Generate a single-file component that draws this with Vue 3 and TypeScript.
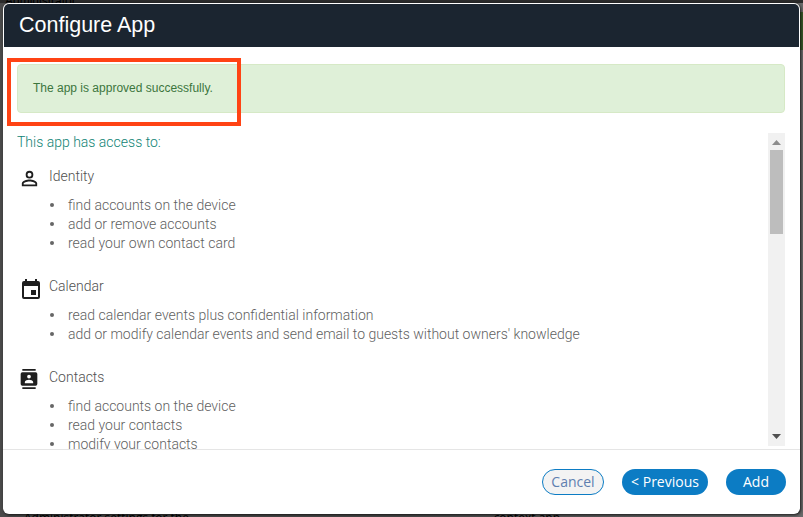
<script setup lang="ts">
interface Group { title: string; icon: string; items: string[] }
const groups: Group[] = [
  { title: 'Identity', icon: 'person', items: ['find accounts on the device', 'add or remove accounts', 'read your own contact card'] },
  { title: 'Calendar', icon: 'calendar', items: ['read calendar events plus confidential information', "add or modify calendar events and send email to guests without owners' knowledge"] },
  { title: 'Contacts', icon: 'contacts', items: ['find accounts on the device', 'read your contacts', 'modify your contacts'] },
]
</script>

<template>
  <div class="page">
    <div class="backdrop-top">Administrator</div>
    <div class="band"></div>
    <div class="backdrop-bottom"><span>Administrator settings for the</span><span>context app</span></div>
    <div class="modal">
      <header class="head">Configure App</header>
      <div class="body">
        <div class="alert">The app is approved successfully.</div>
        <div class="scroll">
          <div class="content">
            <p class="lead">This app has access to:</p>
            <section v-for="g in groups" :key="g.title" class="group">
              <div class="gtitle">
                <span class="slot">
                  <svg v-if="g.icon === 'person'" class="ic person" viewBox="0 0 24 24"><path d="M12 6a2.1 2.1 0 1 1 0 4.200A2.100 2.100 0 0 1 12 6m0 9c2.970 0 6.100 1.460 6.100 2.100v1.100H5.900v-1.100c0-.64 3.130-2.100 6.100-2.100M12 4a4 4 0 1 0 0 8 4 4 0 0 0 0-8zm0 9c-2.670 0-8 1.340-8 4v3h16v-3c0-2.660-5.330-4-8-4z"/></svg>
                  <svg v-else-if="g.icon === 'calendar'" class="ic calendar" viewBox="0 0 24 24"><path d="M17 12h-5v5h5v-5zM16 1v2H8V1H6v2H5a2 2 0 0 0-2 2v14a2 2 0 0 0 2 2h14a2 2 0 0 0 2-2V5a2 2 0 0 0-2-2h-1V1h-2zm3 18H5V8h14v11z"/></svg>
                  <svg v-else class="ic contacts" viewBox="0 0 24 24"><path d="M20 0H4v2h16V0zM4 24h16v-2H4v2zM20 4H4a2 2 0 0 0-2 2v12a2 2 0 0 0 2 2h16a2 2 0 0 0 2-2V6a2 2 0 0 0-2-2zm-8 2.750a2.250 2.250 0 1 1 0 4.500 2.250 2.250 0 0 1 0-4.500zM17 17H7v-1.500c0-1.670 3.330-2.500 5-2.500s5 .83 5 2.500V17z"/></svg>
                </span>
                <span>{{ g.title }}</span>
              </div>
              <ul>
                <li v-for="item in g.items" :key="item">{{ item }}</li>
              </ul>
            </section>
          </div>
          <div class="track">
            <svg class="arrow" viewBox="0 0 9 5"><path d="M4.500 0 9 5H0z" fill="#8c8c8c"/></svg>
            <div class="thumb"></div>
            <div class="spacer"></div>
            <svg class="arrow" viewBox="0 0 9 5"><path d="M0 0h9L4.500 5z" fill="#505050"/></svg>
          </div>
        </div>
      </div>
      <footer class="foot">
        <button class="btn cancel">Cancel</button>
        <button class="btn primary prev">&lt; Previous</button>
        <button class="btn primary add">Add</button>
      </footer>
    </div>
    <div class="mark"></div>
  </div>
</template>

<style>
html, body { margin: 0; padding: 0; background: #555555; }
</style>

<style scoped>
.page {
  position: relative;
  width: 803px;
  height: 517px;
  overflow: hidden;
  background: linear-gradient(90deg, #4a4a4a 0, #4a4a4a 50%, #6a6a6a 100%);
  box-sizing: border-box;
  padding: 3px 3px 3px 3px;
}
.backdrop-top {
  position: absolute;
  left: 0;
  right: 0;
  top: 0;
  height: 3px;
  overflow: hidden;
  background: #2b2b2b;
  padding-left: 5px;
  font: 12px/2px "Liberation Sans", sans-serif;
  color: #000;
}
.band {
  position: absolute;
  right: 0;
  top: 12px;
  width: 4px;
  height: 38px;
  background: #3a5a2a;
}
.backdrop-bottom {
  position: absolute;
  left: 24px;
  right: 0;
  top: 509px;
  display: flex;
  justify-content: space-between;
  padding-right: 243px;
  font: 12px "Open Sans", sans-serif;
  color: #000;
}
.modal {
  position: relative;
  height: 511px;
  box-sizing: border-box;
  background: #fff;
  border-radius: 6px;
  box-shadow: 1px 1px 3px rgba(0, 0, 0, 0.75);
  padding: 1px 0 0 1px;
  display: flex;
  flex-direction: column;
  overflow: hidden;
}
.head {
  height: 43px;
  margin-right: 1px;
  background: #1b2530;
  border-radius: 5px 5px 0 0;
  color: #fff;
  font: 21.5px/43px "Liberation Sans", Arial, sans-serif;
  padding-left: 15px;
}
.body {
  flex: 1;
  min-height: 0;
  display: flex;
  flex-direction: column;
  padding: 17px 15px 0 13px;
}
.alert {
  height: 49px;
  box-sizing: border-box;
  background: #dff0d8;
  border: 1px solid #d6e9c6;
  border-radius: 4px;
  color: #3c763d;
  font: 12px/47px "Liberation Sans", Arial, sans-serif;
  padding-left: 15px;
  flex: none;
}
.scroll {
  margin-top: 20px;
  height: 316px;
  display: flex;
  overflow: hidden;
}
.content {
  flex: 1;
  min-width: 0;
  font-family: Roboto, sans-serif;
  font-weight: 300;
  font-size: 14px;
  line-height: 19px;
  color: #5f5f5f;
}
.lead {
  margin: 0;
  color: #0f8374;
  font-size: 14px;
  line-height: 19px;
}
.group { margin-top: 15px; height: 91px; }
.group + .group { margin-top: 0; height: 91px; }
.group:nth-of-type(2) { margin-top: 19px; }
.gtitle {
  display: flex;
  align-items: center;
  height: 19px;
  gap: 7px;
  padding-left: 2px;
  color: #505050;
}
.slot {
  width: 23px;
  height: 19px;
  flex: none;
  display: flex;
  align-items: center;
  justify-content: center;
}
.ic { flex: none; fill: #1f1f1f; }
.person { width: 23px; height: 23px; margin: 4px 2px 0 0; }
.calendar { width: 24px; height: 24px; margin-top: 6px; }
.contacts { width: 20px; height: 20px; margin: 3px 3px 0 0; }
ul {
  margin: 10px 0 0;
  padding: 0 0 0 51px;
  list-style: none;
}
li { line-height: 19px; }
li::before {
  content: "";
  display: inline-block;
  width: 4px;
  height: 4px;
  border-radius: 50%;
  margin-left: -18px;
  margin-right: 14px;
  vertical-align: 3px;
  background: #666;
}
.track {
  width: 17px;
  height: 313px;
  flex: none;
  background: #f1f1f1;
  display: flex;
  flex-direction: column;
  align-items: center;
  padding: 7px 2px;
  box-sizing: border-box;
}
.arrow { width: 9px; height: 5px; flex: none; }
.thumb {
  width: 13px;
  height: 84px;
  margin-top: 5px;
  background: #bdbdbd;
  flex: none;
}
.spacer { flex: 1; }
.foot {
  height: 65px;
  flex: none;
  margin-left: -1px;
  border-top: 1px solid #e5e5e5;
  display: flex;
  align-items: flex-start;
  justify-content: flex-end;
  padding: 19px 14px 0 0;
  box-sizing: border-box;
}
.btn {
  height: 26px;
  box-sizing: border-box;
  border-radius: 13px;
  font: 400 14px/1 "Open Sans", sans-serif;
  padding: 0;
  cursor: pointer;
}
.cancel {
  width: 62px;
  background: #f3f3f3;
  border: 1px solid #0c7cc4;
  color: #5f7fb0;
}
.primary { background: #0c7cc4; border: 0; color: #fff; }
.prev { width: 86px; margin-left: 18px; }
.add { width: 60px; margin-left: 18px; }
.mark {
  position: absolute;
  left: 7px;
  top: 58px;
  width: 234px;
  height: 68px;
  box-sizing: border-box;
  border: 4px solid #ff4314;
}
</style>
